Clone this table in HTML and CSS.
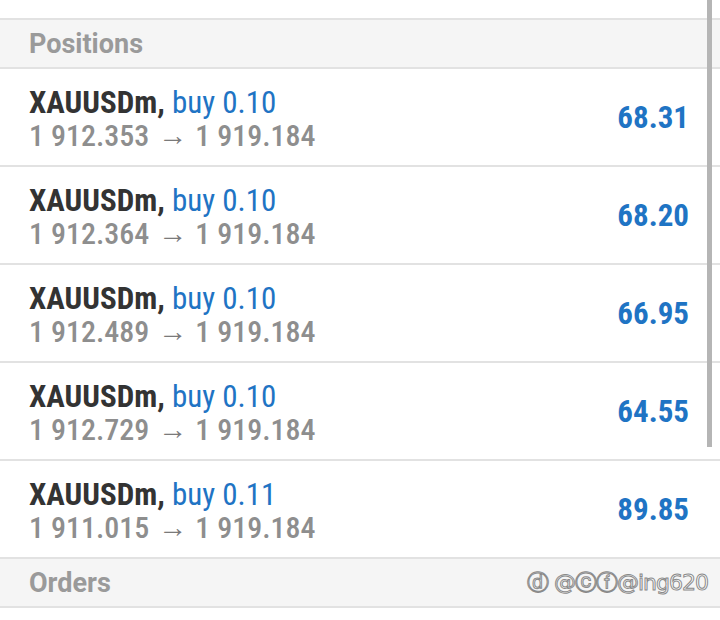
FILE: index.html
```html
<!DOCTYPE html>
<html>
<head>
<meta charset="utf-8">
<link rel="stylesheet" href="styles.css">
</head>
<body>
<div class="screen">
  <div class="top"></div>
  <div class="section">Positions</div>
  <div class="row">
    <div class="info">
      <div class="l1"><span class="sym">XAUUSDm,</span> <span class="side">buy 0.10</span></div>
      <div class="l2">1 912.353<span class="arr">→</span>1 919.184</div>
    </div>
    <div class="profit">68.31</div>
  </div>
  <div class="row">
    <div class="info">
      <div class="l1"><span class="sym">XAUUSDm,</span> <span class="side">buy 0.10</span></div>
      <div class="l2">1 912.364<span class="arr">→</span>1 919.184</div>
    </div>
    <div class="profit">68.20</div>
  </div>
  <div class="row">
    <div class="info">
      <div class="l1"><span class="sym">XAUUSDm,</span> <span class="side">buy 0.10</span></div>
      <div class="l2">1 912.489<span class="arr">→</span>1 919.184</div>
    </div>
    <div class="profit">66.95</div>
  </div>
  <div class="row">
    <div class="info">
      <div class="l1"><span class="sym">XAUUSDm,</span> <span class="side">buy 0.10</span></div>
      <div class="l2">1 912.729<span class="arr">→</span>1 919.184</div>
    </div>
    <div class="profit">64.55</div>
  </div>
  <div class="row">
    <div class="info">
      <div class="l1"><span class="sym">XAUUSDm,</span> <span class="side">buy 0.11</span></div>
      <div class="l2">1 911.015<span class="arr">→</span>1 919.184</div>
    </div>
    <div class="profit">89.85</div>
  </div>
  <div class="section orders">Orders<span class="mark">ⓓ @ⓒⓕ@ing620</span></div>
  <div class="scrollbar"></div>
</div>
</body>
</html>
```
FILE: styles.css
```css
html, body {
  margin: 0;
  padding: 0;
  background: #ffffff;
}
.screen {
  position: relative;
  width: 720px;
  height: 620px;
  overflow: hidden;
  font-family: "Roboto Condensed", Roboto, "Liberation Sans", sans-serif;
  font-stretch: condensed;
}
.top {
  height: 18px;
  border-bottom: 2px solid #e2e2e2;
}
.section {
  height: 47px;
  display: flex;
  align-items: center;
  justify-content: space-between;
  padding: 0 12px 0 29px;
  background: #f5f5f5;
  border-bottom: 2px solid #e2e2e2;
  color: #9a9a9a;
  font-family: Roboto, "Liberation Sans", sans-serif;
  font-stretch: normal;
  font-size: 27px;
  font-weight: 700;
}
.row {
  height: 96px;
  display: flex;
  align-items: center;
  justify-content: space-between;
  padding: 0 31px 0 29px;
  border-bottom: 2px solid #e2e2e2;
}
.info {
  display: flex;
  flex-direction: column;
  margin-top: 3px;
}
.l1, .l2 {
  font-size: 31px;
  line-height: 33px;
  white-space: nowrap;
}
.l2 {
  font-size: 30px;
  color: #8e8e8e;
  font-weight: 500;
}
.sym {
  font-weight: 700;
  color: #333333;
}
.side {
  color: #1f74c4;
}
.arr {
  display: inline-block;
  font-family: Roboto, sans-serif;
  font-stretch: normal;
  font-size: 29px;
  line-height: 20px;
  font-weight: 400;
  color: #7a7a7a;
  transform: translateY(-1px);
  margin: 0 8px 0 9px;
}
.profit {
  font-size: 31px;
  font-weight: 700;
  color: #1f74c4;
}
.mark {
  font-size: 22px;
  font-weight: 400;
  color: #ffffff;
  -webkit-text-stroke: 1px #8a8a8a;
  font-family: "DejaVu Sans", sans-serif;
  letter-spacing: -1px;
}
.scrollbar {
  position: absolute;
  left: 707px;
  top: 0;
  width: 5px;
  height: 447px;
  background: #b5b5b5;
}
```
